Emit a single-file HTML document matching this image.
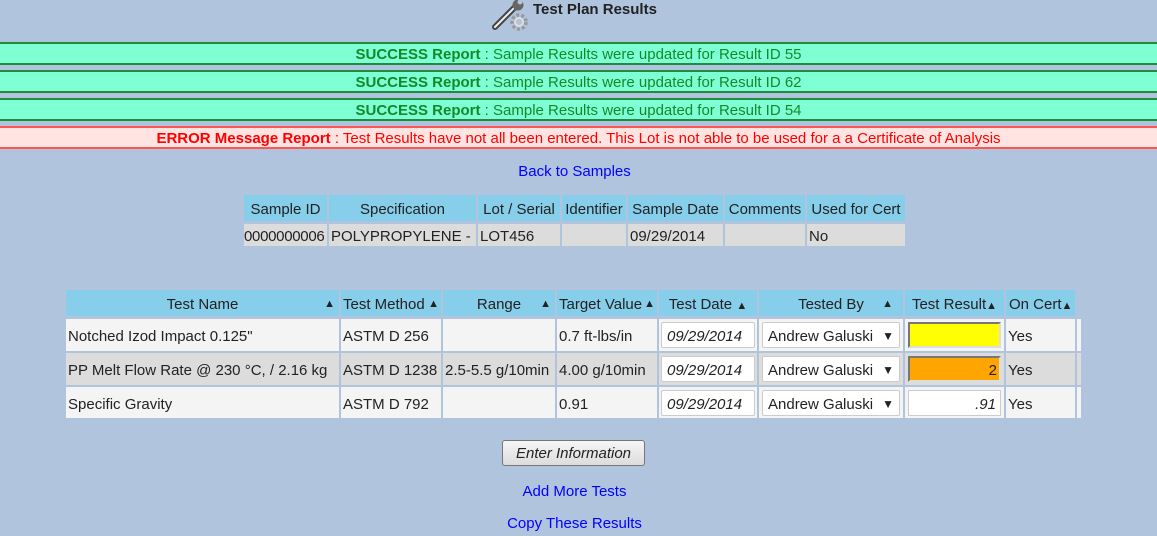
<!DOCTYPE html>
<html><head><meta charset="utf-8"><style>
body{margin:0;width:1157px;height:536px;background:#b0c4de;font-family:"Liberation Sans",Arial,sans-serif;font-size:15px;color:#222;position:relative;overflow:hidden}
.a{position:absolute;box-sizing:border-box}
.bn{left:0;width:1157px;height:23px;text-align:center;line-height:22px;font-size:15px}
.g{background:#7fffd4;border-top:2px solid #1e8c3a;border-bottom:2px solid #1e8c3a;color:#138a2a}
.r{background:#ffe4e1;border-top:2px solid #f55;border-bottom:2px solid #f55;color:#f00}
.h{background:#87ceeb;height:26px;line-height:29px;text-align:center;white-space:nowrap;overflow:hidden}
.c{height:22px;line-height:25px;padding-left:2px;white-space:nowrap;overflow:hidden;background:#dcdcdc}
.t{line-height:35px;padding-left:2px;white-space:nowrap;overflow:hidden}
.arr{position:absolute;right:4px;top:0;font-size:11px}
.sa{font-size:11px}
.inp{background:#fff;border:1px solid #ccc;border-radius:2px;height:26px;line-height:27px;font-style:italic;padding-left:5px}
.dd{position:absolute;right:5px;font-size:12px}
.lnk{color:#00f;text-align:center;width:1157px;left:0}
</style></head><body>
<svg class="a" style="left:489px;top:0" width="40" height="32" viewBox="0 0 40 32">
<path d="M6 27 L27 6" stroke="#444" stroke-width="6" stroke-linecap="round"/>
<path d="M6 27 L27 6" stroke="#eee" stroke-width="2" stroke-linecap="round"/>
<circle cx="29" cy="5" r="5.5" fill="#666"/><circle cx="31" cy="2" r="2.5" fill="#b0c4de"/>
<circle cx="30" cy="22" r="7" fill="none" stroke="#999" stroke-width="3.5" stroke-dasharray="3 2"/>
<circle cx="30" cy="22" r="4" fill="none" stroke="#ddd" stroke-width="2"/>
</svg>
<div class="a" style="left:533px;top:1px;font-weight:bold;font-size:15px">Test Plan Results</div>
<div class="a bn g" style="top:42px"><b>SUCCESS Report</b> : Sample Results were updated for Result ID 55</div>
<div class="a bn g" style="top:70px"><b>SUCCESS Report</b> : Sample Results were updated for Result ID 62</div>
<div class="a bn g" style="top:98px"><b>SUCCESS Report</b> : Sample Results were updated for Result ID 54</div>
<div class="a bn r" style="top:126px"><b>ERROR Message Report</b> : Test Results have not all been entered. This Lot is not able to be used for a a Certificate of Analysis</div>
<div class="a lnk" style="top:163px;left:-4px">Back to Samples</div>

<div class="a h" style="left:244px;top:195px;width:83px">Sample ID</div>
<div class="a h" style="left:329px;top:195px;width:147px">Specification</div>
<div class="a h" style="left:478px;top:195px;width:82px">Lot / Serial</div>
<div class="a h" style="left:562px;top:195px;width:64px">Identifier</div>
<div class="a h" style="left:628px;top:195px;width:95px">Sample Date</div>
<div class="a h" style="left:725px;top:195px;width:80px">Comments</div>
<div class="a h" style="left:807px;top:195px;width:98px">Used for Cert</div>
<div class="a c" style="left:244px;top:224px;width:83px;padding-left:0;letter-spacing:-0.3px">0000000006</div>
<div class="a c" style="left:329px;top:224px;width:147px">POLYPROPYLENE -</div>
<div class="a c" style="left:478px;top:224px;width:82px">LOT456</div>
<div class="a c" style="left:562px;top:224px;width:64px"></div>
<div class="a c" style="left:628px;top:224px;width:95px">09/29/2014</div>
<div class="a c" style="left:725px;top:224px;width:80px"></div>
<div class="a c" style="left:807px;top:224px;width:98px">No</div>

<div class="a h" style="left:66px;top:290px;width:273px">Test Name<span class="arr">▲</span></div>
<div class="a h" style="left:341px;top:290px;width:100px;text-align:left;padding-left:2px">Test Method<span class="arr" style="right:2px">▲</span></div>
<div class="a h" style="left:443px;top:290px;width:112px">Range<span class="arr">▲</span></div>
<div class="a h" style="left:557px;top:290px;width:100px;text-align:left;padding-left:2px">Target Value<span class="arr" style="right:2px">▲</span></div>
<div class="a h" style="left:659px;top:290px;width:98px">Test Date <span class="sa">▲</span></div>
<div class="a h" style="left:759px;top:290px;width:144px">Tested By<span class="arr" style="right:10px">▲</span></div>
<div class="a h" style="left:905px;top:290px;width:99px">Test Result<span class="sa">▲</span></div>
<div class="a h" style="left:1006px;top:290px;width:69px;text-align:left;padding-left:3px">On Cert<span class="sa">▲</span></div>

<div class="a" style="left:66px;top:319px;width:1015px;height:32px;background:#f4f4f4"></div>
<div class="a" style="left:66px;top:353px;width:1015px;height:32px;background:#dcdcdc"></div>
<div class="a" style="left:66px;top:387px;width:1015px;height:31px;background:#f4f4f4"></div>
<div class="a" style="left:339px;top:319px;width:2px;height:99px;background:#b0c4de"></div>
<div class="a" style="left:441px;top:319px;width:2px;height:99px;background:#b0c4de"></div>
<div class="a" style="left:555px;top:319px;width:2px;height:99px;background:#b0c4de"></div>
<div class="a" style="left:657px;top:319px;width:2px;height:99px;background:#b0c4de"></div>
<div class="a" style="left:757px;top:319px;width:2px;height:99px;background:#b0c4de"></div>
<div class="a" style="left:903px;top:319px;width:2px;height:99px;background:#b0c4de"></div>
<div class="a" style="left:1004px;top:319px;width:2px;height:99px;background:#b0c4de"></div>
<div class="a" style="left:1075px;top:319px;width:2px;height:99px;background:#b0c4de"></div>

<div class="a t" style="left:66px;top:319px">Notched Izod Impact 0.125"</div>
<div class="a t" style="left:341px;top:319px">ASTM D 256</div>
<div class="a t" style="left:557px;top:319px">0.7 ft-lbs/in</div>
<div class="a t" style="left:1006px;top:319px">Yes</div>
<div class="a t" style="left:66px;top:353px">PP Melt Flow Rate @ 230 °C, / 2.16 kg</div>
<div class="a t" style="left:341px;top:353px">ASTM D 1238</div>
<div class="a t" style="left:443px;top:353px">2.5-5.5 g/10min</div>
<div class="a t" style="left:557px;top:353px">4.00 g/10min</div>
<div class="a t" style="left:1006px;top:353px">Yes</div>
<div class="a t" style="left:66px;top:387px">Specific Gravity</div>
<div class="a t" style="left:341px;top:387px">ASTM D 792</div>
<div class="a t" style="left:557px;top:387px">0.91</div>
<div class="a t" style="left:1006px;top:387px">Yes</div>

<div class="a inp" style="left:661px;top:322px;width:94px">09/29/2014</div>
<div class="a inp" style="left:661px;top:356px;width:94px">09/29/2014</div>
<div class="a inp" style="left:661px;top:390px;width:94px">09/29/2014</div>
<div class="a inp" style="left:762px;top:322px;width:138px;font-style:normal">Andrew Galuski<span class="dd">▼</span></div>
<div class="a inp" style="left:762px;top:356px;width:138px;font-style:normal">Andrew Galuski<span class="dd">▼</span></div>
<div class="a inp" style="left:762px;top:390px;width:138px;font-style:normal">Andrew Galuski<span class="dd">▼</span></div>
<div class="a" style="left:908px;top:322px;width:93px;height:26px;background:#ff0;border:2px solid #777;border-right-color:#ddd;border-bottom-color:#ddd"></div>
<div class="a" style="left:908px;top:356px;width:93px;height:26px;background:#ffa500;border:2px solid #777;border-right-color:#ddd;border-bottom-color:#ddd;text-align:right;line-height:25px;padding-right:2px">2</div>
<div class="a" style="left:908px;top:390px;width:93px;height:26px;background:#fff;border:1px solid #ccc;text-align:right;line-height:27px;padding-right:4px;font-style:italic">.91</div>

<div class="a" style="left:502px;top:440px;width:143px;height:26px;border:1px solid #777;border-radius:3px;background:linear-gradient(#f6f6f6,#dcdcdc);text-align:center;line-height:26px;font-style:italic">Enter Information</div>
<div class="a lnk" style="top:483px;left:-4px">Add More Tests</div>
<div class="a lnk" style="top:515px;left:-4px">Copy These Results</div>
</body></html>
